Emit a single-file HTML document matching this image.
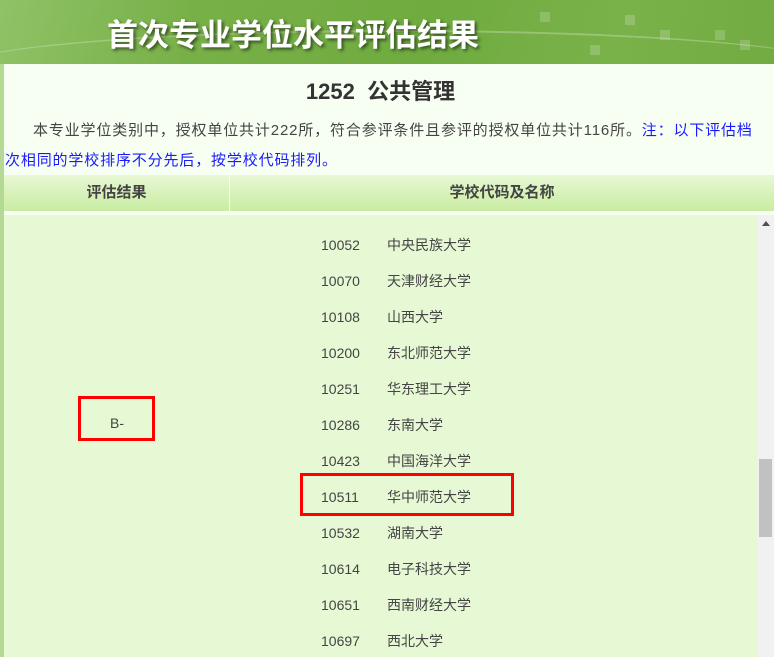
<!DOCTYPE html>
<html><head><meta charset="utf-8"><style>
*{margin:0;padding:0;box-sizing:border-box}
body{width:774px;height:657px;overflow:hidden;background:#f7fff2;font-family:"Liberation Sans","Noto Sans CJK SC",sans-serif;color:#444;position:relative}
.banner{position:absolute;left:0;top:0;width:774px;height:64px;background:linear-gradient(100deg,#8fc266 0%,#78b048 25%,#6fab3f 55%,#7ab24a 80%,#72ab42 100%);overflow:hidden}
.banner .t{position:absolute;left:107px;top:10px;font-size:31px;font-weight:bold;color:#fff;letter-spacing:0;text-shadow:2px 2px 3px rgba(0,0,0,.55);font-family:"Noto Sans CJK SC",sans-serif}
.sq{position:absolute;background:rgba(255,255,255,.18)}
.strip{position:absolute;left:0;top:64px;width:4px;height:593px;background:#b3d994}
h1{position:absolute;left:4px;width:753px;top:74px;text-align:center;font-size:22px;font-weight:bold;color:#333}
.p{position:absolute;left:5px;top:116px;width:761px;font-size:15px;line-height:30px;text-indent:28px;color:#444;letter-spacing:0.85px}
.p span{color:#1a1aff}
.th{position:absolute;top:175px;height:36px;background:linear-gradient(#e8f8d4,#c9eca2);font-size:15px;font-weight:bold;text-align:center;line-height:36px;color:#444}
.body{position:absolute;left:4px;top:215px;width:753px;height:442px;background:#e6f8d4}
.row{position:absolute;left:321px;font-size:14px;color:#444}
.row b{font-weight:normal;display:inline-block;width:66px}
.box{position:absolute;border:3px solid #f00}
.sb{position:absolute;left:757px;top:215px;width:17px;height:442px;background:#f1f1f1}
.thumb{position:absolute;left:759px;top:459px;width:13px;height:78px;background:#c1c1c1}
.arr{position:absolute;left:762px;top:221px;width:0;height:0;border-left:4px solid transparent;border-right:4px solid transparent;border-bottom:5px solid #505050}
</style></head><body>
<div class="banner">
<div class="sq" style="left:540px;top:12px;width:10px;height:10px"></div>
<div class="sq" style="left:625px;top:15px;width:10px;height:10px"></div>
<div class="sq" style="left:660px;top:30px;width:10px;height:10px"></div>
<div class="sq" style="left:715px;top:30px;width:10px;height:10px"></div>
<div class="sq" style="left:740px;top:40px;width:10px;height:10px"></div>
<div class="sq" style="left:590px;top:45px;width:10px;height:10px"></div>
<div style="position:absolute;left:-50px;top:30px;width:900px;height:80px;border-radius:50%;border-top:2px solid rgba(255,255,255,.25)"></div>
<div class="t">首次专业学位水平评估结果</div>
</div>
<div class="strip"></div>
<h1>1252&nbsp; 公共管理</h1>
<div class="p">本专业学位类别中，授权单位共计222所，符合参评条件且参评的授权单位共计116所。<span>注：以下评估档次相同的学校排序不分先后，按学校代码排列。</span></div>
<div class="th" style="left:4px;width:225px">评估结果</div>
<div class="th" style="left:230px;width:544px">学校代码及名称</div>
<div class="body"></div>
<div class="row" style="top:235px"><b>10052</b>中央民族大学</div>
<div class="row" style="top:271px"><b>10070</b>天津财经大学</div>
<div class="row" style="top:307px"><b>10108</b>山西大学</div>
<div class="row" style="top:343px"><b>10200</b>东北师范大学</div>
<div class="row" style="top:379px"><b>10251</b>华东理工大学</div>
<div class="row" style="top:415px"><b>10286</b>东南大学</div>
<div class="row" style="top:451px"><b>10423</b>中国海洋大学</div>
<div class="row" style="top:487px"><b>10511</b>华中师范大学</div>
<div class="row" style="top:523px"><b>10532</b>湖南大学</div>
<div class="row" style="top:559px"><b>10614</b>电子科技大学</div>
<div class="row" style="top:595px"><b>10651</b>西南财经大学</div>
<div class="row" style="top:631px"><b>10697</b>西北大学</div>
<div style="position:absolute;left:110px;top:415px;font-size:14px">B-</div>
<div class="box" style="left:78px;top:396px;width:77px;height:45px"></div>
<div class="box" style="left:300px;top:473px;width:214px;height:43px"></div>
<div class="sb"></div><div class="thumb"></div><div class="arr"></div>
</body></html>
